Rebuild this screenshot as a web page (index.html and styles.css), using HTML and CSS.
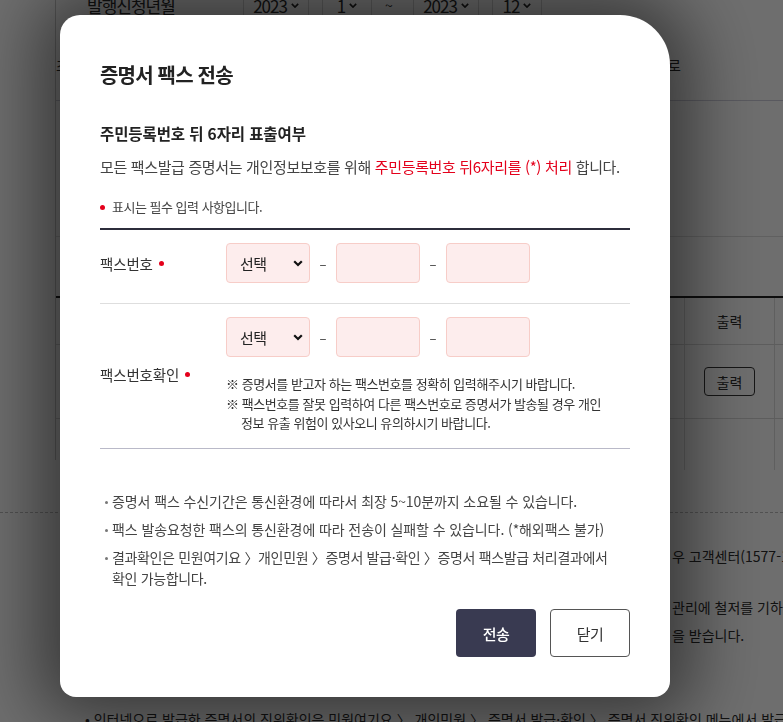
FILE: index.html
```html
<!DOCTYPE html>
<html lang="ko">
<head>
<meta charset="utf-8">
<title>증명서 팩스 전송</title>
<link rel="stylesheet" href="styles.css">
</head>
<body>
<div class="page">
  <div class="upper">
    <div class="search">
      <span class="search-label">발행신청년월</span>
      <span class="ysel wide">2023 <svg class="mini" viewBox="0 0 10 6" width="8" height="5"><path d="M1 1 L5 5 L9 1" fill="none" stroke="currentColor" stroke-width="2"/></svg></span>
      <span class="ysel">1 <svg class="mini" viewBox="0 0 10 6" width="8" height="5"><path d="M1 1 L5 5 L9 1" fill="none" stroke="currentColor" stroke-width="2"/></svg></span>
      <span class="tilde">~</span>
      <span class="ysel wide">2023 <svg class="mini" viewBox="0 0 10 6" width="8" height="5"><path d="M1 1 L5 5 L9 1" fill="none" stroke="currentColor" stroke-width="2"/></svg></span>
      <span class="ysel">12 <svg class="mini" viewBox="0 0 10 6" width="8" height="5"><path d="M1 1 L5 5 L9 1" fill="none" stroke="currentColor" stroke-width="2"/></svg></span>
    </div>
    <p class="guide"><span class="behind">조회기간은 최대 1년까지 선택 가능하며 발급 내역은 발급일 기준으로 정렬되어 보여지므</span>로</p>
    <div class="box"></div>
    <div class="tbl">
      <div class="tr th"><span class="td-main"></span><span class="td-out">출력</span><span class="td-end"></span></div>
      <div class="tr tb"><span class="td-main"></span><span class="td-out"><span class="out-btn">출력</span></span><span class="td-end"></span></div>
      <div class="tr tf"><span class="td-main"></span><span class="td-out"></span><span class="td-end"></span></div>
    </div>
  </div>
  <div class="dashed"></div>
  <p class="bg-line l1"><span class="behind">※ 증명서 팩스 수신에 문제가 있거나 발급 결과 확인이 어려운 경</span>우 고객센터(1577-1234)로 문의하시기 바랍니다.</p>
  <p class="bg-line l2"><span class="behind">※ 발급받은 증명서는 개인정보가 포함되어 있으므로 보</span>관리에 철저를 기하시기 바랍니다.</p>
  <p class="bg-line l3"><span class="behind">※ 증명서를 타인에게 양도하거나 위·변조하는 경우 관련 법령에 따라 처벌</span>을 받습니다.</p>
  <p class="bg-line l4">• 인터넷으로 발급한 증명서의 진위확인은 민원여기요 〉 개인민원 〉 증명서 발급·확인 〉 증명서 진위확인 메뉴에서 발급일로부터</p>
</div>

<div class="dim"></div>

<div class="modal" role="dialog" aria-labelledby="modal-title">
  <h2 class="title" id="modal-title">증명서 팩스 전송</h2>
  <h3 class="subtitle">주민등록번호 뒤 6자리 표출여부</h3>
  <p class="desc">모든 팩스발급 증명서는 개인정보보호를 위해 <em class="red">주민등록번호 뒤6자리를 (*) 처리</em> 합니다.</p>
  <p class="req"><span class="dot"></span>표시는 필수 입력 사항입니다.</p>

  <div class="form">
    <div class="row">
      <div class="label">팩스번호 <span class="dot"></span></div>
      <div class="field">
        <div class="inputs">
          <div class="select">선택<svg viewBox="0 0 10 7" width="10" height="7"><path d="M1.2 1.2 L5 5 L8.8 1.2" fill="none" stroke="#111" stroke-width="2.2"/></svg></div>
          <span class="dash">–</span>
          <div class="input"></div>
          <span class="dash">–</span>
          <div class="input"></div>
        </div>
      </div>
    </div>
    <div class="row last">
      <div class="label">팩스번호확인 <span class="dot"></span></div>
      <div class="field">
        <div class="inputs">
          <div class="select">선택<svg viewBox="0 0 10 7" width="10" height="7"><path d="M1.2 1.2 L5 5 L8.8 1.2" fill="none" stroke="#111" stroke-width="2.2"/></svg></div>
          <span class="dash">–</span>
          <div class="input"></div>
          <span class="dash">–</span>
          <div class="input"></div>
        </div>
        <div class="notes">
          <p>※ 증명서를 받고자 하는 팩스번호를 정확히 입력해주시기 바랍니다.</p>
          <p>※ 팩스번호를 잘못 입력하여 다른 팩스번호로 증명서가 발송될 경우 개인<br>정보 유출 위험이 있사오니 유의하시기 바랍니다.</p>
        </div>
      </div>
    </div>
  </div>

  <ul class="info">
    <li>증명서 팩스 수신기간은 통신환경에 따라서 최장 5~10분까지 소요될 수 있습니다.</li>
    <li>팩스 발송요청한 팩스의 통신환경에 따라 전송이 실패할 수 있습니다. (*해외팩스 불가)</li>
    <li class="path">결과확인은 민원여기요 〉개인민원 〉증명서 발급·확인 〉증명서 팩스발급 처리결과에서<br>확인 가능합니다.</li>
  </ul>

  <div class="actions">
    <button class="btn btn-primary" type="button">전송</button>
    <button class="btn btn-line" type="button">닫기</button>
  </div>
</div>
</body>
</html>
```

FILE: styles.css
```css
* { box-sizing: border-box; margin: 0; padding: 0; }

html, body {
  width: 783px;
  height: 722px;
  overflow: hidden;
}

body {
  font-family: "Noto Sans CJK KR", "Noto Sans", sans-serif;
  background: #fff;
  color: #333;
}

/* ---------- background page ---------- */
.page {
  height: 722px;
  overflow: hidden;
  color: #2b2b2b;
}

.upper {
  margin-left: 55px;
  border-left: 1px solid #c9c9c9;
  height: 470px;
}

.search {
  display: flex;
  align-items: center;
  height: 30px;
  margin-top: -10px;
  padding-left: 31px;
  font-size: 17px;
  letter-spacing: -1px;
}

.search-label { width: 156px; }

.ysel {
  display: flex;
  align-items: center;
  justify-content: center;
  gap: 4px;
  width: 50px;
  height: 30px;
  border-left: 1px solid #d5d5d5;
  border-right: 1px solid #d5d5d5;
  margin-right: 13px;
}
.ysel.wide { width: 66px; }
.mini { color: #222; }

.tilde { width: 16px; margin-right: 12px; font-size: 14px; }

.guide {
  margin-top: 35px;
  font-size: 14px;
  line-height: 20px;
  white-space: nowrap;
  overflow: hidden;
}

.behind {
  display: inline-block;
  width: 612px;
  overflow: hidden;
  white-space: nowrap;
  vertical-align: top;
}

.box {
  margin-top: 25px;
  height: 137px;
  border-top: 1px solid #cfcfdc;
  border-bottom: 1px solid #dedede;
}

.tbl {
  margin-top: 59px;
  border-top: 2px solid #222;
}

.tr {
  display: grid;
  grid-template-columns: 1fr 91px 8px;
  border-bottom: 1px solid #d8d8d8;
}
.tr.th { height: 47px; }
.tr.tb { height: 74px; }
.tr.tf { height: 51px; border-bottom: 0; }

.tr span { display: flex; align-items: center; justify-content: center; }
.td-out { border-left: 1px solid #dcdcdc; border-right: 1px solid #dcdcdc; font-size: 14px; }

.out-btn {
  width: 51px;
  height: 29px;
  border: 1px solid #333;
  border-radius: 4px;
  font-size: 14px;
}

.dashed {
  margin-top: 52px;
  border-top: 1px dashed #bdbdbd;
}

.bg-line {
  padding-left: 85px;
  font-size: 14px;
  line-height: 20px;
  white-space: nowrap;
}
.bg-line .behind { width: 587px; }
.l1 { margin-top: 33px; }
.l2 { margin-top: 31px; }
.l3 { margin-top: 8px; }
.l4 { margin-top: 64px; }

.dim {
  position: fixed;
  inset: 0;
  background: rgba(0, 0, 0, 0.57);
}

/* ---------- modal ---------- */
.modal {
  position: fixed;
  left: 60px;
  top: 15px;
  width: 610px;
  height: 682px;
  background: #fff;
  border-radius: 20px 50px 16px 16px;
  box-shadow: 0 0 70px 22px rgba(0, 0, 0, 0.5);
  padding: 47px 40px 40px;
  display: flex;
  flex-direction: column;
  color: #333;
}

.title {
  font-size: 20px;
  line-height: 26px;
  font-weight: 700;
  letter-spacing: -0.8px;
  color: #222;
}

.subtitle {
  margin-top: 34px;
  font-size: 15.5px;
  line-height: 22px;
  font-weight: 700;
  letter-spacing: -0.1px;
  color: #222;
}

.desc {
  margin-top: 12px;
  font-size: 15px;
  line-height: 22px;
  letter-spacing: -0.35px;
  color: #444;
}

.red { color: #e4001b; font-style: normal; }

.req {
  margin-top: 19px;
  display: flex;
  align-items: center;
  font-size: 13px;
  line-height: 20px;
  letter-spacing: -0.5px;
  color: #444;
}

.dot {
  display: inline-block;
  width: 5px;
  height: 5px;
  border-radius: 50%;
  background: #e4001b;
  flex: none;
}
.req .dot { margin-right: 7px; }

.form {
  margin-top: 11px;
  border-top: 2px solid #2c2d3b;
}

.row {
  display: flex;
  align-items: center;
  padding: 13px 0 20px;
  border-bottom: 1px solid #dedede;
}
.row.last {
  padding-bottom: 15px;
  border-bottom-color: #b9b9c8;
}

.label {
  width: 126px;
  flex: none;
  display: flex;
  align-items: center;
  gap: 6px;
  font-size: 14.5px;
  letter-spacing: -0.15px;
  color: #333;
}

.inputs {
  display: flex;
  align-items: center;
}

.select,
.input {
  width: 84px;
  height: 40px;
  background: #fdeded;
  border: 1px solid #f7cdc8;
  border-radius: 4px;
}

.select {
  display: flex;
  align-items: center;
  justify-content: space-between;
  padding: 0 6px 0 13px;
  font-size: 15px;
  letter-spacing: -0.5px;
  color: #222;
}

.dash {
  width: 26px;
  text-align: center;
  font-size: 13px;
  color: #333;
}

.notes {
  margin-top: 17px;
  font-size: 13px;
  line-height: 19.5px;
  letter-spacing: -0.45px;
  color: #333;
}
.notes p {
  padding-left: 15px;
  text-indent: -15px;
}

.info {
  list-style: none;
  margin-top: 42px;
  font-size: 14px;
  line-height: 21px;
  letter-spacing: -0.1px;
  color: #444;
}
.info li {
  padding-left: 12px;
  margin-bottom: 7px;
}
.info li.path { letter-spacing: -0.35px; }
.info li::before {
  content: "";
  display: inline-block;
  width: 3px;
  height: 3px;
  border-radius: 50%;
  background: #777;
  margin-left: -7px;
  margin-right: 4px;
  vertical-align: middle;
}

.actions {
  margin-top: auto;
  display: flex;
  justify-content: flex-end;
  gap: 14px;
}

.btn {
  width: 80px;
  height: 48px;
  border-radius: 4px;
  font-family: inherit;
  font-size: 15px;
  letter-spacing: -0.5px;
  cursor: pointer;
}
.btn-primary {
  background: #393a51;
  color: #fff;
  border: 0;
  font-weight: 500;
}
.btn-line {
  background: #fff;
  color: #333;
  border: 1px solid #555;
}
```
